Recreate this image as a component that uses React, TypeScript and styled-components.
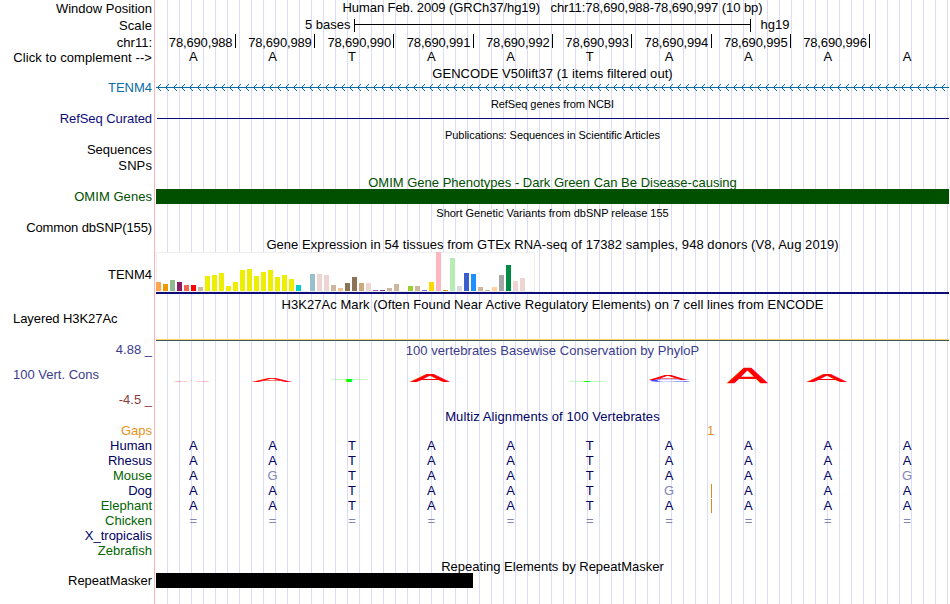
import styled, { createGlobalStyle } from "styled-components";

const GlobalStyle = createGlobalStyle`
  body {
    margin: 0;
    background: #fff;
    overflow: hidden;
  }
`;

const StyledBrowser = styled.main`
  width: 949px;
  height: 604px;
  display: flex;
  flex-direction: column;
  font: 13px/15px "Liberation Sans", Arial, sans-serif;
  color: #000;
  white-space: pre;
`;

const Row = styled.section<{ $height?: number }>`
  display: flex;
  height: ${({ $height }) => ($height ? `${$height}px` : "auto")};
  flex: ${({ $height }) => ($height ? "none" : "1")};
`;

const Labels = styled.div`
  width: 154px;
  padding-right: 2px;
  box-sizing: border-box;
  flex-shrink: 0;
  display: flex;
  flex-direction: column;
  align-items: flex-end;
`;

const Label = styled.span<{ $color?: string; $top?: number; $left?: boolean; $spacing?: number }>`
  color: ${({ $color }) => $color || "#000"};
  margin-top: ${({ $top }) => $top || 0}px;
  margin-left: 13px;
  align-self: ${({ $left }) => ($left ? "flex-start" : "flex-end")};
  letter-spacing: ${({ $spacing }) => $spacing || 0}px;
`;

const Track = styled.div`
  flex: 1;
  min-width: 0;
  border-left: 1px solid #ffb4b4;
  padding-left: 1px;
  background: linear-gradient(90deg, #dcdcf8 1px, transparent 1px) 0 0 / 12px 100%;
  background-origin: padding-box;
  background-clip: content-box;
`;

const Title = styled.h2<{ $color?: string; $top?: number; $small?: boolean; $spacing?: number }>`
  margin: 0;
  padding-top: ${({ $top }) => $top || 0}px;
  font-size: ${({ $small }) => ($small ? 11 : 13)}px;
  font-weight: 400;
  text-align: center;
  color: ${({ $color }) => $color || "#000"};
  letter-spacing: ${({ $spacing }) => $spacing || 0}px;
`;

const Scale = styled.div`
  display: flex;
  padding: 0 0 0 149px;

  .ruler {
    width: 395px;
    height: 13px;
    margin: 2px 10px 0 3px;
    border: solid #000;
    border-width: 0 1px;
    background: linear-gradient(#000, #000) 0 5px / 100% 1px no-repeat;
  }
`;

const Coordinates = styled.div`
  display: grid;
  grid-template-columns: repeat(9, 79.3px);
  padding-left: 0.5px;

  span {
    height: 14px;
    padding: 1px 2.4px 0 0;
    box-sizing: border-box;
    border-right: 1px solid #000;
    text-align: right;
    letter-spacing: -0.15px;
  }
`;

const Bases = styled.div<{ $color?: string }>`
  display: grid;
  grid-template-columns: repeat(10, 79.3px);
  position: relative;
  color: ${({ $color }) => $color || "#000"};

  span {
    padding-right: 4.6px;
    text-align: center;
  }

  .mismatch {
    color: #8286b5;
  }
`;

const Insertion = styled.i<{ $count?: boolean }>`
  position: absolute;
  left: ${({ $count }) => ($count ? 551 : 555)}px;
  top: ${({ $count }) => ($count ? 0 : 1)}px;
  width: ${({ $count }) => ($count ? "auto" : "1px")};
  height: ${({ $count }) => ($count ? 15 : 14)}px;
  background: ${({ $count }) => ($count ? "none" : "#d98c1e")};
  color: #e69119;
  font-style: normal;
`;

const Item = styled.div<{ $color: string; $height: number; $top?: number; $left?: number; $width?: number }>`
  width: ${({ $width }) => ($width ? `${$width}px` : "auto")};
  height: ${({ $height }) => $height}px;
  margin-top: ${({ $top }) => $top || 0}px;
  margin-left: ${({ $left }) => $left || 0}px;
  background: ${({ $color }) => $color};
`;

const Expression = styled.div`
  height: 43px;
  box-sizing: border-box;
  padding-top: 1px;
  border-bottom: 2px solid #0c0c78;

  .tissues {
    width: 379px;
    height: 40px;
    padding-bottom: 1px;
    box-sizing: border-box;
    display: flex;
    align-items: flex-end;
    gap: 2px;
    background: #fff;
    box-shadow: inset 0 0 0 1px #eee;
  }
`;

const Tissue = styled.div`
  width: 5px;
  flex-shrink: 0;
`;

const Signal = styled.div`
  height: 2px;
  margin-top: 28px;
  box-sizing: border-box;
  border-top: 1px solid #ffd060;
  border-bottom: 1px solid #3c5a5a;
`;

const Drawing = styled.svg`
  display: block;
`;

const NAVY = "#0c0c78";
const DARK_NAVY = "#000064";
const GREEN = "#006400";
const YELLOW = "#eeee00";
const TAN = "#cdb79e";
const ROSE = "#eed5d2";

const tissues: [number, string][] = [
  [9, "#ffa54f"],
  [7, "#ee9a00"],
  [11, "#8fbc8f"],
  [9, "#8b1c62"],
  [6, "#ee6a50"],
  [6, "#ff0000"],
  [4, TAN],
  [15, YELLOW],
  [16, YELLOW],
  [18, YELLOW],
  [5, YELLOW],
  [9, YELLOW],
  [21, YELLOW],
  [22, YELLOW],
  [15, YELLOW],
  [19, YELLOW],
  [21, YELLOW],
  [14, YELLOW],
  [16, YELLOW],
  [12, YELLOW],
  [6, "#00cdcd"],
  [0, "#ee82ee"],
  [17, "#9ac0cd"],
  [17, ROSE],
  [16, ROSE],
  [6, TAN],
  [3, "#eec591"],
  [8, "#8b7355"],
  [14, "#8b7355"],
  [8, "#cdaa7d"],
  [8, ROSE],
  [1, "#b452cd"],
  [1, "#7a378b"],
  [3, TAN],
  [7, TAN],
  [0, TAN],
  [5, "#9acd32"],
  [5, TAN],
  [1, "#7a67ee"],
  [9, "#ffd700"],
  [39, "#ffb6c1"],
  [1, "#cd9b1d"],
  [33, "#b4eeb4"],
  [5, "#d9d9d9"],
  [18, "#3a5fcd"],
  [17, "#1e90ff"],
  [4, TAN],
  [1, TAN],
  [4, "#ffd39b"],
  [16, "#a6a6a6"],
  [26, "#008b45"],
  [10, ROSE],
  [13, ROSE],
  [0, "#ff00ff"],
];

// x, bottom, width, height and stroke of every stretched letter in the logo
const logo = [
  { base: "A", x: 16.5, y: 25, w: 39, h: 1.6, color: "#ff0000", stroke: 0 },
  { base: "A", x: 96.5, y: 25, w: 39, h: 3.6, color: "#ff0000", stroke: 2 },
  { base: "T", x: 174, y: 25, w: 38, h: 3, color: "#00ff00", stroke: 0 },
  { base: "A", x: 254.5, y: 25, w: 39, h: 7.6, color: "#ff0000", stroke: 2 },
  { base: "T", x: 412, y: 25, w: 38, h: 1, color: "#00ff00", stroke: 0 },
  { base: "C", x: 492, y: 25, w: 44, h: 1.8, color: "#4646ff", stroke: 2 },
  { base: "A", x: 492.5, y: 23, w: 39, h: 4.6, color: "#ff0000", stroke: 0 },
  { base: "A", x: 572, y: 25.7, w: 39, h: 14.8, color: "#ff0000", stroke: 3 },
  { base: "A", x: 651.5, y: 25, w: 39, h: 7.6, color: "#ff0000", stroke: 2 },
];

const advance: Record<string, number> = { A: 66.7, C: 72.2, T: 61.1 };

const species = [
  { name: "Human", color: DARK_NAVY, bases: "AATAATAAAA" },
  { name: "Rhesus", color: DARK_NAVY, bases: "AATAATAAAA" },
  { name: "Mouse", color: GREEN, bases: "AGTAATAAAG" },
  { name: "Dog", color: DARK_NAVY, bases: "AATAATGAAA", insertion: true },
  { name: "Elephant", color: GREEN, bases: "AATAATAAAA", insertion: true },
  { name: "Chicken", color: GREEN, bases: "==========" },
  { name: "X_tropicalis", color: DARK_NAVY, bases: "" },
  { name: "Zebrafish", color: GREEN, bases: "" },
];

const positions = Array.from({ length: 9 }, (_, i) => `78,690,${988 + i}`);

type TitleRowProps = {
  text: string;
  height?: number;
  top?: number;
  color?: string;
  small?: boolean;
  spacing?: number;
};

function TitleRow({ text, height = 16, top = 0, color, small, spacing }: TitleRowProps) {
  return (
    <Row $height={height}>
      <Labels />
      <Track>
        <Title $top={top} $color={color} $small={small} $spacing={spacing}>{text}</Title>
      </Track>
    </Row>
  );
}

function GeneArrows() {
  return (
    <Drawing width="793" height="15" shapeRendering="crispEdges">
      <defs>
        <pattern id="strand" x="1" width="8" height="15" patternUnits="userSpaceOnUse">
          <path
            d="M0 7h8v1h-8zM1 6h1v1h-1zM2 5h1v1h-1zM3 4h1v1h-1zM1 8h1v1h-1zM2 9h1v1h-1zM3 10h1v1h-1z"
            fill="#0c6ca8"
          />
        </pattern>
      </defs>
      <rect width="793" height="15" fill="url(#strand)" />
    </Drawing>
  );
}

function ConservationLogo() {
  return (
    <Drawing width="793" height="50" fontFamily="Liberation Sans, Arial, sans-serif" fontSize="100">
      {logo.map(({ base, x, y, w, h, color, stroke }) => (
        <text
          key={`${base}${x}`}
          fill={color}
          stroke={color}
          strokeWidth={stroke}
          transform={`translate(${x} ${y}) scale(${w / advance[base]} ${h / 68.8})`}
        >
          {base}
        </text>
      ))}
    </Drawing>
  );
}

export default function App() {
  return (
    <>
      <GlobalStyle />
      <StyledBrowser>
        <Row $height={17}>
          <Labels>
            <Label $top={1}>Window Position</Label>
          </Labels>
          <Track>
            <Title $spacing={-0.07}>
              {"Human Feb. 2009 (GRCh37/hg19)   chr11:78,690,988-78,690,997 (10 bp)"}
            </Title>
          </Track>
        </Row>
        <Row $height={17}>
          <Labels>
            <Label $top={1} $spacing={0.1}>Scale</Label>
          </Labels>
          <Track>
            <Scale>
              <span>5 bases</span>
              <div className="ruler" />
              <span>hg19</span>
            </Scale>
          </Track>
        </Row>
        <Row $height={15}>
          <Labels>
            <Label $top={1}>chr11:</Label>
          </Labels>
          <Track>
            <Coordinates>
              {positions.map(position => (
                <span key={position}>{position}</span>
              ))}
            </Coordinates>
          </Track>
        </Row>
        <Row $height={15}>
          <Labels>
            <Label $top={1} $spacing={0.08}>{"Click to complement -->"}</Label>
          </Labels>
          <Track>
            <Bases>
              {"AATAATAAAA".split("").map((base, i) => (
                <span key={i}>{base}</span>
              ))}
            </Bases>
          </Track>
        </Row>

        <TitleRow text="GENCODE V50lift37 (1 items filtered out)" top={2} spacing={0.05} />
        <Row $height={15}>
          <Labels>
            <Label $color="#0c6ca8">TENM4</Label>
          </Labels>
          <Track>
            <GeneArrows />
          </Track>
        </Row>

        <TitleRow text="RefSeq genes from NCBI" top={2} small spacing={-0.04} />
        <Row $height={15}>
          <Labels>
            <Label $color={NAVY} $spacing={-0.07}>RefSeq Curated</Label>
          </Labels>
          <Track>
            <Item $color={NAVY} $height={1} $top={7} $left={1} />
          </Track>
        </Row>

        <TitleRow text="Publications: Sequences in Scientific Articles" top={2} small spacing={-0.06} />
        <Row $height={31}>
          <Labels>
            <Label>Sequences</Label>
            <Label $top={1} $spacing={0.1}>SNPs</Label>
          </Labels>
          <Track />
        </Row>

        <TitleRow text="OMIM Gene Phenotypes - Dark Green Can Be Disease-causing" top={2} color="#005000" />
        <Row $height={15}>
          <Labels>
            <Label $color="#005000" $spacing={0.05}>OMIM Genes</Label>
          </Labels>
          <Track>
            <Item $color="#005000" $height={15} />
          </Track>
        </Row>

        <TitleRow text="Short Genetic Variants from dbSNP release 155" top={2} small spacing={-0.02} />
        <Row $height={15}>
          <Labels>
            <Label $spacing={-0.12}>Common dbSNP(155)</Label>
          </Labels>
          <Track />
        </Row>

        <TitleRow
          text="Gene Expression in 54 tissues from GTEx RNA-seq of 17382 samples, 948 donors (V8, Aug 2019)"
          top={2}
          spacing={0.055}
        />
        <Row $height={43}>
          <Labels>
            <Label $top={16}>TENM4</Label>
          </Labels>
          <Track>
            <Expression>
              <div className="tissues">
                {tissues.map(([height, color], i) => (
                  <Tissue key={i} style={{ height, background: color }} />
                ))}
              </div>
            </Expression>
          </Track>
        </Row>

        <TitleRow
          text="H3K27Ac Mark (Often Found Near Active Regulatory Elements) on 7 cell lines from ENCODE"
          height={17}
          top={3}
          spacing={0.05}
        />
        <Row $height={30}>
          <Labels>
            <Label $left $spacing={-0.07}>Layered H3K27Ac</Label>
          </Labels>
          <Track>
            <Signal />
          </Track>
        </Row>

        <Row $height={16}>
          <Labels>
            <Label $color="#3c3c8c" $top={1}>4.88 _</Label>
          </Labels>
          <Track>
            <Title $top={2} $color="#3c3c8c" $spacing={0.03}>
              100 vertebrates Basewise Conservation by PhyloP
            </Title>
          </Track>
        </Row>
        <Row $height={50}>
          <Labels>
            <Label $color="#3c3c8c" $top={10} $left>100 Vert. Cons</Label>
            <Label $color="#8c3c3c" $top={10}>-4.5 _</Label>
          </Labels>
          <Track>
            <ConservationLogo />
          </Track>
        </Row>

        <TitleRow text="Multiz Alignments of 100 Vertebrates" top={2} color={DARK_NAVY} spacing={0.1} />
        <Row $height={15}>
          <Labels>
            <Label $color="#e69119">Gaps</Label>
          </Labels>
          <Track>
            <Bases>
              <Insertion $count>1</Insertion>
            </Bases>
          </Track>
        </Row>
        {species.map(({ name, color, bases, insertion }) => (
          <Row $height={15} key={name}>
            <Labels>
              <Label $color={color}>{name}</Label>
            </Labels>
            <Track>
              <Bases $color={DARK_NAVY}>
                {bases.split("").map((base, i) => (
                  <span key={i} className={base === "G" || base === "=" ? "mismatch" : undefined}>{base}</span>
                ))}
                {insertion && <Insertion />}
              </Bases>
            </Track>
          </Row>
        ))}

        <TitleRow text="Repeating Elements by RepeatMasker" height={15} top={1} />
        <Row $height={15}>
          <Labels>
            <Label $spacing={-0.05}>RepeatMasker</Label>
          </Labels>
          <Track>
            <Item $color="#000" $height={15} $width={317} />
          </Track>
        </Row>
        <Row>
          <Labels />
          <Track />
        </Row>
      </StyledBrowser>
    </>
  );
}
